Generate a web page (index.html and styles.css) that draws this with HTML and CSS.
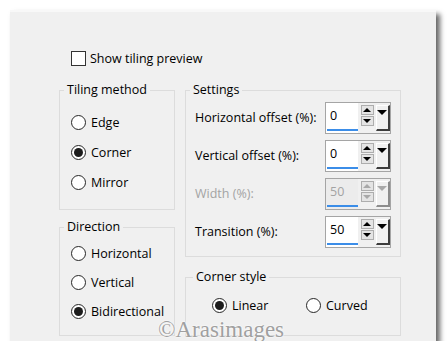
FILE: index.html
```html
<!DOCTYPE html>
<html lang="en">
<head>
    <meta charset="UTF-8">
    <title>Tiling</title>
    <link rel="stylesheet" href="styles.css">
</head>
<body>
    <div class="dialog">
        <label class="check"><span class="box"></span>Show tiling preview</label>

        <div class="cols">
            <div class="col left">
                <div class="group method">
                    <span class="legend">Tiling method</span>
                    <div class="radios">
                        <div class="radio"><span class="dot"></span>Edge</div>
                        <div class="radio"><span class="dot on"></span>Corner</div>
                        <div class="radio"><span class="dot"></span>Mirror</div>
                    </div>
                </div>
                <div class="group direction">
                    <span class="legend">Direction</span>
                    <div class="radios">
                        <div class="radio"><span class="dot"></span>Horizontal</div>
                        <div class="radio"><span class="dot"></span>Vertical</div>
                        <div class="radio"><span class="dot on"></span>Bidirectional</div>
                    </div>
                </div>
            </div>

            <div class="col right">
                <div class="group settings">
                    <span class="legend">Settings</span>
                    <div class="rows">
                        <div class="row">
                            <span class="label">Horizontal offset (%):</span>
                            <div class="spin">
                                <div class="val"><span class="num">0</span><span class="bar"></span></div>
                                <div class="steps"><span class="step"><i class="up"></i></span><span class="step"><i class="down"></i></span></div>
                                <span class="drop"><i class="down"></i></span>
                            </div>
                        </div>
                        <div class="row">
                            <span class="label">Vertical offset (%):</span>
                            <div class="spin">
                                <div class="val"><span class="num">0</span><span class="bar"></span></div>
                                <div class="steps"><span class="step"><i class="up"></i></span><span class="step"><i class="down"></i></span></div>
                                <span class="drop"><i class="down"></i></span>
                            </div>
                        </div>
                        <div class="row off">
                            <span class="label">Width (%):</span>
                            <div class="spin">
                                <div class="val"><span class="num">50</span><span class="bar"></span></div>
                                <div class="steps"><span class="step"><i class="up"></i></span><span class="step"><i class="down"></i></span></div>
                                <span class="drop"><i class="down"></i></span>
                            </div>
                        </div>
                        <div class="row">
                            <span class="label">Transition (%):</span>
                            <div class="spin">
                                <div class="val"><span class="num">50</span><span class="bar"></span></div>
                                <div class="steps"><span class="step"><i class="up"></i></span><span class="step"><i class="down"></i></span></div>
                                <span class="drop"><i class="down"></i></span>
                            </div>
                        </div>
                    </div>
                </div>
                <div class="group corner">
                    <span class="legend">Corner style</span>
                    <div class="pair">
                        <div class="radio"><span class="dot on"></span>Linear</div>
                        <div class="radio"><span class="dot"></span>Curved</div>
                    </div>
                </div>
            </div>
        </div>

        <div class="mark">©Arasimages</div>
    </div>
</body>
</html>
```

FILE: styles.css
```css
body {
    margin: 0;
    background: #fff;
    font-family: "Open Sans", "Noto Sans", sans-serif;
    font-size: 12.5px;
    color: #000;
}
.dialog {
    position: relative;
    margin: 10px 0 0 10px;
    width: 426px;
    height: 331px;
    box-sizing: border-box;
    padding: 37px 0 0 49px;
    background: #f0f0f0;
    border-top: 2px solid #f8f8f8;
    box-shadow: 4px 4px 5px rgba(0, 0, 0, 0.6);
}
.check {
    display: flex;
    align-items: center;
    height: 18px;
    margin-left: 12px;
}
.box {
    width: 13px;
    height: 13px;
    margin-right: 4px;
    background: #fff;
    border: 1px solid #333;
}
.cols {
    display: flex;
    gap: 10px;
    margin-top: 23px;
}
.col {
    display: flex;
    flex-direction: column;
}
.left {
    width: 116px;
}
.right {
    width: 216px;
}
.group {
    box-sizing: border-box;
    border: 1px solid #dcdcdc;
}
.legend {
    display: block;
    width: max-content;
    height: 16px;
    line-height: 16px;
    margin: -9px 0 0 4px;
    padding: 0 3px;
    background: #f0f0f0;
}
.method {
    height: 120px;
}
.direction {
    height: 109px;
    margin-top: 17px;
}
.settings {
    height: 167px;
}
.corner {
    height: 59px;
    margin-top: 20px;
}
.corner .legend {
    margin-left: 7px;
}
.radios {
    padding-left: 11px;
}
.method .radios {
    margin-top: 9px;
}
.direction .radios {
    margin-top: 4px;
}
.radio {
    display: flex;
    align-items: center;
    height: 30px;
}
.direction .radio {
    height: 29px;
}
.dot {
    position: relative;
    width: 13px;
    height: 13px;
    margin-right: 5px;
    border: 1px solid #262626;
    border-radius: 50%;
    background: #fff;
}
.dot.on::after {
    content: "";
    position: absolute;
    left: 2px;
    top: 2px;
    width: 9px;
    height: 9px;
    border-radius: 50%;
    background: #1c1c1c;
}
.rows {
    display: flex;
    flex-direction: column;
    gap: 6px;
    margin-top: 4px;
    padding-left: 9px;
}
.row {
    display: flex;
    align-items: center;
    height: 32px;
}
.label {
    width: 130px;
    margin-top: -2px;
}
.off .label {
    color: #a3a3a3;
}
.spin {
    display: flex;
    width: 66px;
    height: 32px;
    box-sizing: border-box;
    border: 1px solid #a5a5a5;
    background: #f0f0f0;
}
.val {
    display: flex;
    flex-direction: column;
    width: 32px;
    padding: 0 0 2px 1px;
    background: #fff;
}
.num {
    flex: 1;
    padding: 3px 0 0 3px;
    line-height: 20px;
}
.bar {
    height: 2px;
    background: #3b8de8;
}
.off .val {
    background: #ececec;
}
.off .num {
    color: #a3a3a3;
}
.steps {
    display: flex;
    flex-direction: column;
    gap: 1px;
    margin: 2px 0 0 3px;
}
.step {
    display: flex;
    align-items: center;
    justify-content: center;
    width: 11px;
    height: 8px;
    border: 1px solid #adadad;
    background: #e4e4e4;
}
.drop {
    display: flex;
    justify-content: center;
    width: 15px;
    height: 26px;
    margin: 2px 0 0 2px;
    padding-top: 4px;
    box-sizing: border-box;
    background: #f0f0f0;
    border-top: 1px solid #fff;
    border-left: 1px solid #fff;
    border-right: 2px solid #3c3c3c;
    border-bottom: 2px solid #3c3c3c;
}
.up {
    border-left: 4px solid transparent;
    border-right: 4px solid transparent;
    border-bottom: 4px solid #000;
}
.down {
    border-left: 4px solid transparent;
    border-right: 4px solid transparent;
    border-top: 4px solid #000;
}
.drop .down {
    height: 0;
    border-left-width: 5px;
    border-right-width: 5px;
    border-top-width: 5px;
}
.off .up {
    border-bottom-color: #a8a8a8;
}
.off .down {
    border-top-color: #a8a8a8;
}
.off .drop {
    border-right-color: #8c8c8c;
    border-bottom-color: #8c8c8c;
}
.pair {
    display: flex;
    margin: 5px 0 0 26px;
}
.pair .radio {
    width: 97px;
}
.mark {
    position: absolute;
    left: 148px;
    top: 306px;
    font-family: "Liberation Serif", serif;
    font-size: 23px;
    line-height: 24px;
    color: #a0a0a0;
    text-shadow: 0 0 2px #fff, 0 0 2px #fff;
}
```
